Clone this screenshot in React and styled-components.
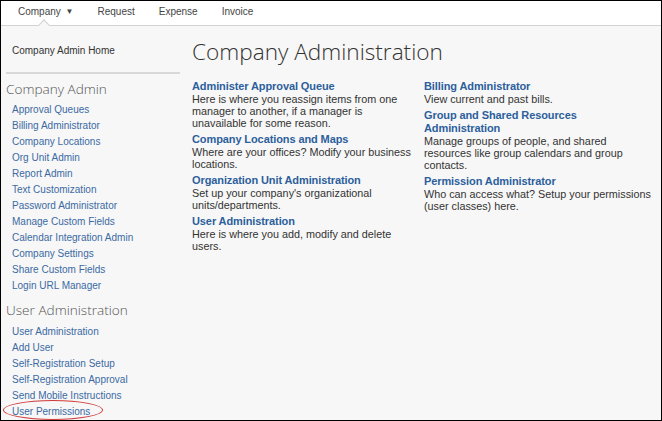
import styled, { createGlobalStyle } from "styled-components";

const Global = createGlobalStyle`
  html, body { margin: 0; padding: 0; }
  body { font-family: "Liberation Sans", Arial, sans-serif; }
`;

const companyLinks = [
    "Approval Queues",
    "Billing Administrator",
    "Company Locations",
    "Org Unit Admin",
    "Report Admin",
    "Text Customization",
    "Password Administrator",
    "Manage Custom Fields",
    "Calendar Integration Admin",
    "Company Settings",
    "Share Custom Fields",
    "Login URL Manager",
];

const userLinks = [
    "User Administration",
    "Add User",
    "Self-Registration Setup",
    "Self-Registration Approval",
    "Send Mobile Instructions",
    "User Permissions",
];

const leftItems = [
    { title: "Administer Approval Queue", text: "Here is where you reassign items from one manager to another, if a manager is unavailable for some reason." },
    { title: "Company Locations and Maps", text: "Where are your offices? Modify your business locations." },
    { title: "Organization Unit Administration", text: "Set up your company's organizational units/departments." },
    { title: "User Administration", text: "Here is where you add, modify and delete users." },
];

const rightItems = [
    { title: "Billing Administrator", text: "View current and past bills." },
    { title: "Group and Shared Resources Administration", text: "Manage groups of people, and shared resources like group calendars and group contacts." },
    { title: "Permission Administrator", text: "Who can access what? Setup your permissions (user classes) here." },
];

export default function App() {
    return (
        <Frame>
            <Global />
            <Nav>
                <NavItem $active>Company <Caret>▼</Caret></NavItem>
                <NavItem>Request</NavItem>
                <NavItem>Expense</NavItem>
                <NavItem>Invoice</NavItem>
            </Nav>
            <Body>
                <Sidebar>
                    <HomeLink>Company Admin Home</HomeLink>
                    <SideHeading>Company Admin</SideHeading>
                    {companyLinks.map((l) => <SideLink key={l}>{l}</SideLink>)}
                    <SideHeading $gap>User Administration</SideHeading>
                    {userLinks.map((l) => (
                        <SideLink key={l} $circled={l === "User Permissions"}>{l}</SideLink>
                    ))}
                </Sidebar>
                <Main>
                    <Title>Company Administration</Title>
                    <Columns>
                        <Column>
                            {leftItems.map((i) => (
                                <Item key={i.title}>
                                    <ItemTitle>{i.title}</ItemTitle>
                                    <ItemText>{i.text}</ItemText>
                                </Item>
                            ))}
                        </Column>
                        <Column>
                            {rightItems.map((i) => (
                                <Item key={i.title}>
                                    <ItemTitle>{i.title}</ItemTitle>
                                    <ItemText>{i.text}</ItemText>
                                </Item>
                            ))}
                        </Column>
                    </Columns>
                </Main>
            </Body>
        </Frame>
    );
}

const Frame = styled.div`
    width: 662px;
    height: 421px;
    box-sizing: border-box;
    border: 1px solid #000;
    background: #f7f7f7;
    display: flex;
    flex-direction: column;
    overflow: hidden;
`;

const Nav = styled.nav`
    height: 23px;
    flex-shrink: 0;
    background: #fff;
    border-bottom: 1px solid #d2d2d2;
    display: flex;
    align-items: flex-start;
    padding: 1px 0 0 17px;
    gap: 24px;
`;

const NavItem = styled.div`
    position: relative;
    font-size: 10px;
    color: #444;
    line-height: 20px;

    ${(p) => p.$active && `
    &::after {
        content: "";
        position: absolute;
        left: 22px;
        top: 19px;
        width: 7px;
        height: 7px;
        background: #f7f7f7;
        border-top: 1px solid #d2d2d2;
        border-left: 1px solid #d2d2d2;
        transform: rotate(45deg);
    }
    `}
`;

const Caret = styled.span`
    display: inline-block;
    font-size: 8px;
    vertical-align: 1px;
    margin-left: 2px;
`;

const Body = styled.div`
    flex: 1;
    display: flex;
`;

const Sidebar = styled.aside`
    width: 174px;
    padding-left: 5px;
    display: flex;
    flex-direction: column;
`;

const HomeLink = styled.div`
    font-size: 10px;
    color: #333;
    line-height: 16px;
    padding: 17px 0 0 6px;
    height: 29px;
    border-bottom: 2px solid #d8d8d8;
`;

const SideHeading = styled.div`
    font-family: "Open Sans", sans-serif;
    font-weight: 300;
    font-size: 13.6px;
    color: #555;
    line-height: 20px;
    margin: ${(p) => (p.$gap ? "6px 0 4px 0" : "5px 0 3px 0")};
`;

const SideLink = styled.div`
    position: relative;
    font-size: 10px;
    color: #3b6aa3;
    line-height: 16px;
    padding-left: 6px;

    ${(p) => p.$circled && `
    &::after {
        content: "";
        position: absolute;
        left: -3px;
        top: -4px;
        width: 98px;
        height: 18px;
        border: 1.3px solid #d03a3a;
        border-radius: 50%;
    }
    `}
`;

const Main = styled.main`
    flex: 1;
    padding-left: 12px;
`;

const Title = styled.h1`
    margin: 10px 0 0 0;
    font-family: "Open Sans", sans-serif;
    font-weight: 300;
    font-size: 22.6px;
    line-height: 32px;
    color: #333;
`;

const Columns = styled.div`
    display: grid;
    grid-template-columns: 220px 228px;
    column-gap: 12px;
    margin-top: 12px;
`;

const Column = styled.div`
    display: flex;
    flex-direction: column;
    gap: 4px;
`;

const Item = styled.div``;

const ItemTitle = styled.div`
    font-size: 11px;
    font-weight: bold;
    letter-spacing: -0.1px;
    color: #2c5f9c;
    line-height: 13px;
`;

const ItemText = styled.div`
    font-size: 10.8px;
    color: #333;
    line-height: 12px;
`;
